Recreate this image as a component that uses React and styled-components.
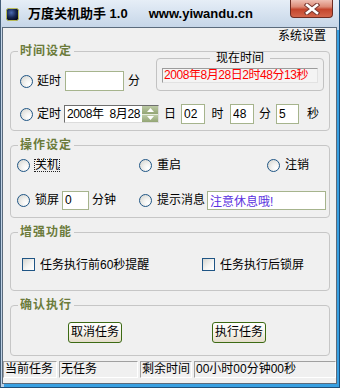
import React from "react";
import styled, { createGlobalStyle } from "styled-components";

const GlobalStyle = createGlobalStyle`
  html, body { margin: 0; padding: 0; background: #fff; }
  body {
    font-family: "Liberation Sans", "Noto Sans CJK SC", sans-serif;
    font-size: 12px;
    color: #000;
  }
  * { box-sizing: border-box; }
`;

const FONT = `"Liberation Sans", "Noto Sans CJK SC", sans-serif`;

const Window = styled.div`
  width: 340px;
  height: 388px;
  display: flex;
  flex-direction: column;
  background: linear-gradient(#e6eef7, #c6d6e8 27px, #bcd0e5);
  border-left: 1px solid #445e78;
  border-right: 1px solid #1f4e78;
  border-bottom: 1px solid #1f4e78;
  padding: 0 2px 3px 1px;
`;

const TitleBar = styled.div`
  height: 27px;
  display: flex;
  align-items: flex-start;
  padding-left: 4px;
  flex: none;
`;

const AppIcon = styled.svg`
  width: 13px;
  height: 13px;
  margin-top: 8px;
  flex: none;
`;

const TitleText = styled.span`
  margin-left: ${(p) => p.$ml}px;
  margin-top: 6px;
  font: bold 13px/15px ${FONT};
  color: #000;
  white-space: pre;
`;

const CloseBtn = styled.div`
  margin-left: auto;
  margin-right: 4px;
  width: 43px;
  height: 18px;
  border: 1px solid #6e2c22;
  border-top: none;
  border-radius: 0 0 4px 4px;
  background: linear-gradient(#efc0b4, #dc8a76 40%, #c4462d 55%, #d4664c);
  display: flex;
  align-items: center;
  justify-content: center;
`;

const Client = styled.div`
  flex: 1;
  display: flex;
  flex-direction: column;
  background: #f0f0f0;
  border: 1px solid #5b6b7c;
  box-shadow: 2px 3px 0 #38a0e2;
  line-height: 14px;
`;

const MenuRow = styled.div`
  height: 16px;
  line-height: 16px;
  text-align: right;
  padding-right: 10px;
`;

const Groups = styled.div`
  padding: 0 6px 0 7px;
  display: flex;
  flex-direction: column;
`;

const Group = styled.fieldset`
  margin: ${(p) => p.$mt || 0}px 0 0;
  padding: 0 0 ${(p) => p.$pb || 0}px 0;
  border: 1px solid #c6c6c6;
  border-radius: 4px;
  min-width: 0;
`;

const Legend = styled.legend`
  margin-left: 7px;
  padding: 0 2px;
  font: bold 12px/14px ${FONT};
  letter-spacing: 1px;
  color: #6b7b3b;
`;

const Row = styled.div`
  display: flex;
  align-items: ${(p) => p.$align || "center"};
  margin-top: ${(p) => p.$mt || 0}px;
  padding-left: ${(p) => p.$pl || 0}px;
  padding-right: ${(p) => p.$pr || 0}px;
  height: ${(p) => (p.$h ? `${p.$h}px` : "auto")};
`;

const Inline = styled.div`
  display: flex;
  align-items: center;
  height: 20px;
`;

const Radio = styled.span`
  width: 13px;
  height: 13px;
  border-radius: 50%;
  border: 1px solid #1f5585;
  background: radial-gradient(circle at 72% 72%, #ffffff 0%, #f3f3f1 35%, #d2d2cc 100%);
  flex: none;
`;

const Check = styled.span`
  width: 13px;
  height: 13px;
  border: 1px solid #1f5585;
  background: linear-gradient(135deg, #d6d6d0, #f4f4f2 55%, #ffffff);
  flex: none;
`;

const Label = styled.span`
  margin-left: ${(p) => (p.$ml === undefined ? 5 : p.$ml)}px;
  white-space: nowrap;
  line-height: 14px;
`;

const Focused = styled.span`
  margin-left: 5px;
  line-height: 11px;
  outline: 1px dotted #222;
  outline-offset: 0;
`;

const TextBox = styled.input`
  width: ${(p) => p.$w}px;
  height: ${(p) => p.$h || 20}px;
  margin-left: ${(p) => p.$ml || 0}px;
  padding: 0 2px;
  border: 1px solid #a6b48d;
  background: #fff;
  font: 12px/16px ${FONT};
  color: ${(p) => p.$color || "#000"};
  outline: none;
  flex: ${(p) => (p.$grow ? 1 : "none")};
  min-width: 0;
`;

const Unit = styled.span`
  width: ${(p) => p.$w}px;
  text-align: center;
  flex: none;
`;

const NowGroup = styled.fieldset`
  margin: 0 0 0 auto;
  padding: 0 5px 7px;
  width: 168px;
  border: 1px solid #c2c2c2;
  border-radius: 4px;
  min-width: 0;
`;

const NowLegend = styled.legend`
  margin: 0 auto;
  padding: 0 6px;
  font: 12px/14px ${FONT};
`;

const NowBox = styled.div`
  margin-top: 3px;
  height: 15px;
  border: 1px solid;
  border-color: #9c9c9c #e2e2e2 #e2e2e2 #9c9c9c;
  background: #f4f4f4;
  color: #ff0000;
  font: 12px/13px ${FONT};
  letter-spacing: -0.45px;
  padding-left: 1px;
  white-space: nowrap;
  overflow: hidden;
`;

const DatePicker = styled.div`
  width: 95px;
  height: 18px;
  margin-left: 3px;
  display: flex;
  border: 1px solid;
  border-color: #6f6f6f #dcdcdc #dcdcdc #6f6f6f;
  background: #fff;
  flex: none;
`;

const DateText = styled.span`
  flex: 1;
  padding-left: 2px;
  white-space: pre;
  overflow: hidden;
  letter-spacing: -0.4px;
  font: 12px/16px ${FONT};
`;

const Spin = styled.div`
  width: 16px;
  display: flex;
  flex-direction: column;
  flex: none;
`;

const SpinHalf = styled.div`
  flex: 1;
  display: flex;
  align-items: center;
  justify-content: center;
  background: linear-gradient(#bccaa5, #93a574);
  border-top: ${(p) => (p.$lower ? "1px solid #e6ecdc" : "none")};
`;

const OpGrid = styled.div`
  display: grid;
  grid-template-columns: 122px 128px 1fr;
  grid-auto-rows: 20px;
  row-gap: 15px;
  padding: 3px 3px 7px 6px;
`;

const Cell = styled.div`
  display: flex;
  align-items: center;
  grid-column: ${(p) => p.$span || "auto"};
`;

const CheckGrid = styled.div`
  display: grid;
  grid-template-columns: 180px 1fr;
  padding: 18px 0 18px 11px;
  height: 51px;
`;

const ButtonGrid = styled.div`
  display: grid;
  grid-template-columns: 144px 1fr;
  padding: 10px 0 12px 57px;
`;

const Button = styled.button`
  width: 54px;
  height: 21px;
  padding: 0;
  border: 1px solid #3c6a14;
  border-radius: 3px;
  background: linear-gradient(#ffffff, #f6f3ec 50%, #e5ddcb);
  font: 12px/19px ${FONT};
  color: #000;
`;

const StatusBar = styled.div`
  margin-top: 5px;
  height: 17px;
  display: flex;
  gap: 2px;
`;

const StatusCell = styled.div`
  width: ${(p) => (p.$w ? `${p.$w}px` : "auto")};
  flex: ${(p) => (p.$w ? "none" : 1)};
  border: 1px solid;
  border-color: #a0a0a0 #ffffff #ffffff #a0a0a0;
  padding: 0 1px;
  line-height: 15px;
  white-space: nowrap;
  overflow: hidden;
`;

export default function App() {
  return (
    <>
      <GlobalStyle />
      <Window>
        <TitleBar>
          <AppIcon viewBox="0 0 13 13">
            <defs>
              <radialGradient id="ic" cx="40%" cy="35%" r="70%">
                <stop offset="0" stopColor="#4a6ab0" />
                <stop offset="0.6" stopColor="#14244e" />
                <stop offset="1" stopColor="#050a1c" />
              </radialGradient>
            </defs>
            <rect x="0.5" y="0.5" width="12" height="12" rx="2" fill="url(#ic)" stroke="#b9bb55" />
          </AppIcon>
          <TitleText $ml={9}>万度关机助手 1.0</TitleText>
          <TitleText $ml={21}>www.yiwandu.cn</TitleText>
          <CloseBtn>
            <svg width="16" height="12" viewBox="0 0 16 12">
              <path d="M3 2 L13 10 M13 2 L3 10" stroke="#7a3a32" strokeWidth="4.6" strokeLinecap="square" />
              <path d="M3 2 L13 10 M13 2 L3 10" stroke="#ffffff" strokeWidth="2.6" strokeLinecap="square" />
            </svg>
          </CloseBtn>
        </TitleBar>
        <Client>
          <MenuRow>系统设置</MenuRow>
          <Groups>
            <Group $pb={6}>
              <Legend>时间设定</Legend>
              <Row $align="flex-end" $mt={-7} $pl={9} $pr={5}>
                <Inline>
                  <Radio />
                  <Label $ml={4}>延时</Label>
                  <TextBox $w={59} $ml={4} readOnly value="" />
                  <Label $ml={4}>分</Label>
                </Inline>
                <NowGroup>
                  <NowLegend>现在时间</NowLegend>
                  <NowBox>2008年8月28日2时48分13秒</NowBox>
                </NowGroup>
              </Row>
              <Row $mt={13} $pl={9} $h={20}>
                <Radio />
                <Label $ml={4}>定时</Label>
                <DatePicker>
                  <DateText>{"2008年  8月28"}</DateText>
                  <Spin>
                    <SpinHalf>
                      <svg width="7" height="4" viewBox="0 0 7 4">
                        <path d="M0 4 L3.5 0 L7 4 Z" fill="#fff" />
                      </svg>
                    </SpinHalf>
                    <SpinHalf $lower>
                      <svg width="7" height="4" viewBox="0 0 7 4">
                        <path d="M0 0 L3.5 4 L7 0 Z" fill="#fff" />
                      </svg>
                    </SpinHalf>
                  </Spin>
                </DatePicker>
                <Unit $w={22}>日</Unit>
                <TextBox $w={24} readOnly value="02" />
                <Unit $w={25}>时</Unit>
                <TextBox $w={24} readOnly value="48" />
                <Unit $w={22}>分</Unit>
                <TextBox $w={23} readOnly value="5" />
                <Unit $w={28}>秒</Unit>
              </Row>
            </Group>

            <Group $mt={7}>
              <Legend>操作设定</Legend>
              <OpGrid>
                <Cell>
                  <Radio />
                  <Focused>关机</Focused>
                </Cell>
                <Cell>
                  <Radio />
                  <Label>重启</Label>
                </Cell>
                <Cell>
                  <Radio />
                  <Label>注销</Label>
                </Cell>
                <Cell>
                  <Radio />
                  <Label>锁屏</Label>
                  <TextBox $w={27} $h={19} $ml={3} readOnly value="0" />
                  <Label $ml={3}>分钟</Label>
                </Cell>
                <Cell $span="2 / 4">
                  <Radio />
                  <Label>提示消息</Label>
                  <TextBox $grow $h={19} $ml={2} $color="#5a32e0" readOnly value="注意休息哦!" />
                </Cell>
              </OpGrid>
            </Group>

            <Group $mt={7}>
              <Legend>增强功能</Legend>
              <CheckGrid>
                <Cell>
                  <Check />
                  <Label>任务执行前60秒提醒</Label>
                </Cell>
                <Cell>
                  <Check />
                  <Label>任务执行后锁屏</Label>
                </Cell>
              </CheckGrid>
            </Group>

            <Group $mt={7}>
              <Legend>确认执行</Legend>
              <ButtonGrid>
                <div>
                  <Button>取消任务</Button>
                </div>
                <div>
                  <Button>执行任务</Button>
                </div>
              </ButtonGrid>
            </Group>
          </Groups>
          <StatusBar>
            <StatusCell $w={54}>当前任务</StatusCell>
            <StatusCell $w={79}>无任务</StatusCell>
            <StatusCell $w={52}>剩余时间</StatusCell>
            <StatusCell>00小时00分钟00秒</StatusCell>
          </StatusBar>
        </Client>
      </Window>
    </>
  );
}
